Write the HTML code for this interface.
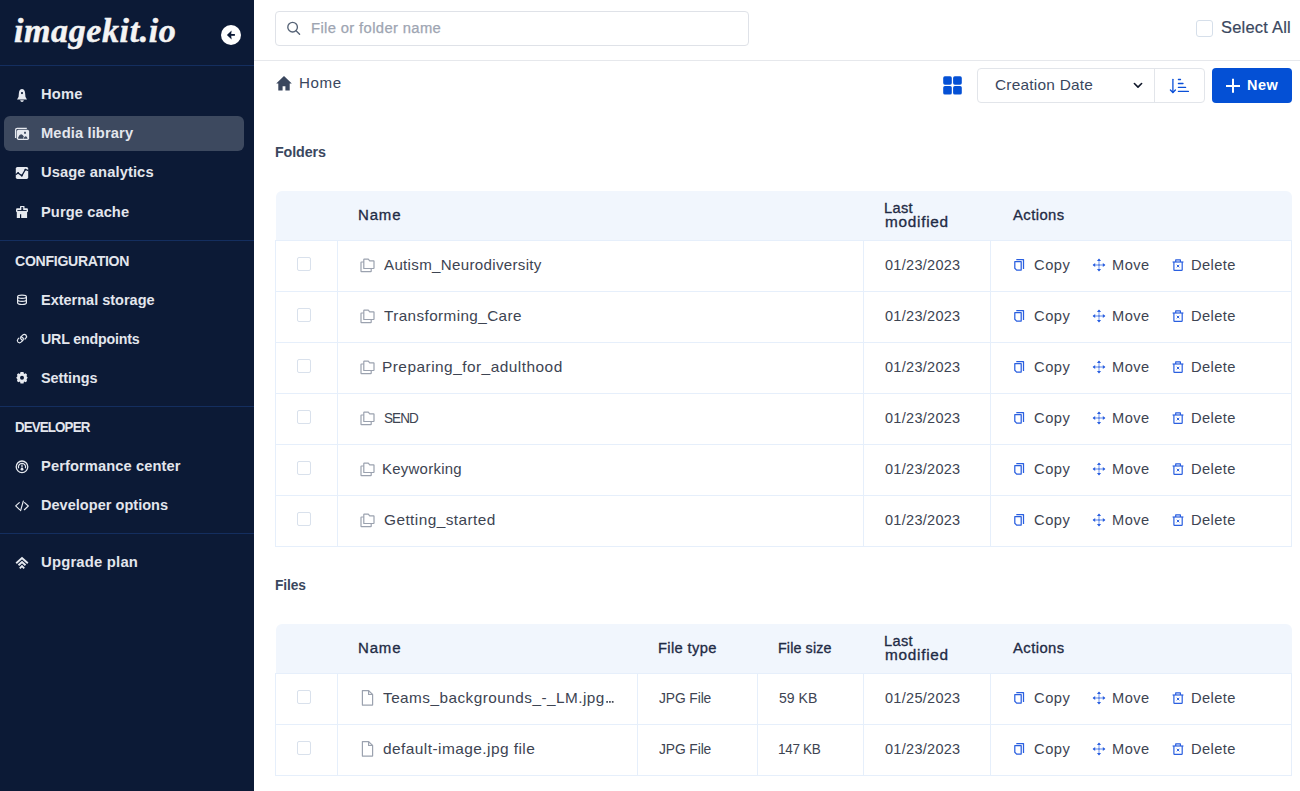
<!DOCTYPE html>
<html><head><meta charset="utf-8">
<style>
*{box-sizing:border-box;margin:0;padding:0}
html,body{width:1300px;height:791px;overflow:hidden;background:#fff;font-family:"Liberation Sans",sans-serif}
.abs{position:absolute}
.tx{position:absolute;white-space:pre;transform-origin:0 0}
#sb{position:absolute;left:0;top:0;width:254px;height:791px;background:#0c1a36}
.sbdiv{position:absolute;left:0;width:254px;height:1px;background:#142e5f}
.chk{position:absolute;width:14px;height:14px;border:1px solid #d9e1ec;border-radius:2px;background:#fff}
.tbl{position:absolute;left:275px;width:1017px;border-left:1px solid #e6effb;border-right:1px solid #e6effb}
.thd{position:absolute;background:#f1f6fd;border-radius:6px 6px 0 0}
.hl{position:absolute;height:1px;background:#e6effb}
.vl{position:absolute;width:1px;background:#e6effb}
svg{position:absolute;overflow:visible}
</style></head><body>
<div id="sb"></div>
<div class="sbdiv" style="top:65px"></div>
<div class="sbdiv" style="top:240px"></div>
<div class="sbdiv" style="top:406px"></div>
<div class="sbdiv" style="top:533px"></div>
<div class="abs" style="left:4px;top:116px;width:240px;height:35px;background:#3d495f;border-radius:6px"></div>
<div class="abs" style="left:254px;top:60px;width:1046px;height:1px;background:#e6e8ec"></div>
<div class="abs" style="left:275px;top:11px;width:474px;height:35px;border:1px solid #dfe2e8;border-radius:4px"></div>
<div class="abs" style="left:1196px;top:20px;width:17px;height:17px;border:1px solid #d6dfea;border-radius:3px"></div>
<div class="abs" style="left:977px;top:68px;width:228px;height:35px;border:1px solid #e2e5ea;border-radius:4px"></div>
<div class="abs" style="left:1154px;top:69px;width:1px;height:33px;background:#e2e5ea"></div>
<div class="abs" style="left:1212px;top:68px;width:80px;height:35px;background:#0450d5;border-radius:4px"></div>
<div class="thd" style="left:276px;top:191px;width:1016px;height:49px"></div>
<div class="vl" style="left:275px;top:240px;height:307px"></div>
<div class="vl" style="left:1291px;top:240px;height:307px"></div>
<div class="hl" style="left:275px;top:240px;width:1017px"></div>
<div class="hl" style="left:275px;top:291px;width:1017px"></div>
<div class="hl" style="left:275px;top:342px;width:1017px"></div>
<div class="hl" style="left:275px;top:393px;width:1017px"></div>
<div class="hl" style="left:275px;top:444px;width:1017px"></div>
<div class="hl" style="left:275px;top:495px;width:1017px"></div>
<div class="hl" style="left:275px;top:546px;width:1017px"></div>
<div class="vl" style="left:337px;top:240px;height:306px"></div>
<div class="vl" style="left:863px;top:240px;height:306px"></div>
<div class="vl" style="left:990px;top:240px;height:306px"></div>
<div class="chk" style="left:297px;top:257px"></div>
<div class="chk" style="left:297px;top:308px"></div>
<div class="chk" style="left:297px;top:359px"></div>
<div class="chk" style="left:297px;top:410px"></div>
<div class="chk" style="left:297px;top:461px"></div>
<div class="chk" style="left:297px;top:512px"></div>
<div class="thd" style="left:276px;top:624px;width:1016px;height:49px"></div>
<div class="vl" style="left:275px;top:673px;height:103px"></div>
<div class="vl" style="left:1291px;top:673px;height:103px"></div>
<div class="hl" style="left:275px;top:673px;width:1017px"></div>
<div class="hl" style="left:275px;top:724px;width:1017px"></div>
<div class="hl" style="left:275px;top:775px;width:1017px"></div>
<div class="vl" style="left:337px;top:673px;height:102px"></div>
<div class="vl" style="left:637px;top:673px;height:102px"></div>
<div class="vl" style="left:757px;top:673px;height:102px"></div>
<div class="vl" style="left:863px;top:673px;height:102px"></div>
<div class="vl" style="left:990px;top:673px;height:102px"></div>
<div class="chk" style="left:297px;top:690px"></div>
<div class="chk" style="left:297px;top:741px"></div>
<div class="tx" style="left:14px;top:14.3px;font-family:'Liberation Serif',serif;font-style:italic;font-weight:700;font-size:34px;line-height:34px;color:#f4f4f4;letter-spacing:0.6px;-webkit-text-stroke:0.5px #f4f4f4">imagekit.io</div>
<svg style="left:221px;top:25px" width="20" height="20" viewBox="0 0 20 20"><circle cx="10" cy="10" r="10" fill="#fff"/><path d="M5.9 9.9 L10.6 5.4 L10.1 9.9 L10.6 14.4 Z" fill="#0c1a36"/><rect x="9.8" y="9" width="4.1" height="1.8" fill="#0c1a36"/></svg>
<svg style="left:0;top:0" width="254" height="600" viewBox="0 0 254 600"><path d="M18.4 98.5 L18.9 93 C19.1 90.3 20.4 89 22 89 C23.6 89 24.9 90.3 25.1 93 L25.6 98.5 Z" fill="#e7eaf0"/><path d="M17 99.6 L27 99.6 L25.6 97.2 L18.4 97.2 Z" fill="#e7eaf0"/><circle cx="22" cy="93.1" r="1.05" fill="#0c1a36"/><path d="M20.1 100.2 L23.9 100.2 Q23.6 102 22 102 Q20.4 102 20.1 100.2 Z" fill="#e7eaf0"/><path d="M15.6 138 L15.6 130 Q15.6 128.3 17.3 128.3 L26.8 128.3" stroke="#e7eaf0" stroke-width="1.3" fill="none"/><rect x="16.8" y="129.8" width="12.3" height="10.3" rx="1.8" fill="#e7eaf0"/><path d="M18.2 138.8 L18.2 137.5 Q19.5 134.2 21.3 134.3 Q22.8 134.6 23.6 136.3 L23.2 138.8 Z" fill="#3d495f"/><path d="M23.5 138.8 Q24.3 136 25.8 136.2 Q27.2 136.5 27.6 138.8 Z" fill="#3d495f"/><rect x="24" y="131.8" width="2" height="1.9" rx="0.4" fill="#3d495f"/><rect x="15.8" y="167" width="12.4" height="11.9" rx="1.6" fill="#e7eaf0"/><path d="M15.5 174.7 L18.1 173 L21.8 175.8 L25.4 169.5 L28.5 170.6" stroke="#0c1a36" stroke-width="1.3" fill="none"/><circle cx="18.1" cy="173" r="0.9" fill="#0c1a36"/><circle cx="21.8" cy="175.5" r="0.9" fill="#0c1a36"/><circle cx="25.4" cy="169.6" r="0.9" fill="#0c1a36"/><rect x="20" y="205.9" width="4.5" height="3.5" rx="0.6" fill="#e7eaf0"/><rect x="21.3" y="207.1" width="1.9" height="3.4" fill="#0c1a36"/><rect x="16" y="208.2" width="12" height="4" rx="1.3" fill="#e7eaf0"/><rect x="17.4" y="210.1" width="9.2" height="0.9" fill="#0c1a36"/><rect x="21.3" y="208.2" width="1.9" height="2" fill="#0c1a36"/><path d="M16.8 212 L27.1 212 L27.1 218 L21.2 218 L21.2 214.3 L20 214.3 L20 218 L16.8 218 Z" fill="#e7eaf0"/><g stroke="#e7eaf0" stroke-width="1.2" fill="none"><ellipse cx="22" cy="296.8" rx="4.4" ry="1.6"/><path d="M17.6 296.8 L17.6 302.8 Q17.6 304.5 22 304.5 Q26.4 304.5 26.4 302.8 L26.4 296.8"/><path d="M17.6 299.8 Q17.6 301.4 22 301.4 Q26.4 301.4 26.4 299.8"/></g><g stroke="#e7eaf0" stroke-width="1.2" fill="none" stroke-linecap="round"><path d="M21.2 336.6 L22.6 335.1 Q24.3 333.6 25.9 335 Q27.3 336.6 25.8 338.2 L25 339"/><path d="M22.6 340.6 L21.3 341.9 Q19.6 343.5 18 342.1 Q16.6 340.5 18.1 338.9 L18.9 338.1"/><path d="M21.1 336.6 Q20 338 21 339 Q22 340 22.6 340.6"/><path d="M22.8 340.3 Q24 339 23 338 Q22 337 21.3 336.8"/></g><path d="M22 371.9 L23.5 372 L24 374 L25.7 373.2 L27 374.5 L26.6 376.2 L27.7 377.7 L26.6 379.2 L27 380.9 L25.7 382.2 L24 381.4 L23.5 383.5 L20.5 383.5 L20 381.4 L18.3 382.2 L17 380.9 L17.4 379.2 L16.2 377.7 L17.4 376.2 L17 374.5 L18.3 373.2 L20 374 L20.5 372 Z" fill="#e7eaf0"/><circle cx="22" cy="377.7" r="2" fill="#0c1a36"/><circle cx="22" cy="466.8" r="5.8" stroke="#e7eaf0" stroke-width="1.3" fill="none"/><path d="M18.6 468.2 A3.6 3.6 0 1 1 25.4 468.2" stroke="#e7eaf0" stroke-width="1.2" fill="none"/><rect x="21.4" y="464.5" width="1.2" height="3" fill="#e7eaf0"/><circle cx="22" cy="469.2" r="1.4" fill="#e7eaf0"/><g stroke="#e7eaf0" stroke-width="1.2" fill="none" stroke-linecap="round" stroke-linejoin="round"><path d="M19.3 502.6 L15.7 505.9 L19.6 509.6"/><path d="M24.6 502.6 L28.3 506 L24.4 509.7"/><path d="M23.3 501.2 L20.6 510.6"/></g><g stroke="#e7eaf0" stroke-width="1.9" fill="none" stroke-linejoin="miter"><path d="M16.2 563.3 L22 558 L27.8 563.3"/><path d="M18.5 565.2 L22 562 L25.5 565.2"/><path d="M19.8 568.4 L22 566.2 L24.2 568.4"/></g></svg>
<svg style="left:0;top:0" width="1300" height="791" viewBox="0 0 1300 791"><circle cx="292.6" cy="27.2" r="4.8" stroke="#566376" stroke-width="1.35" fill="none"/><path d="M296.3 30.9 L299.6 34.2" stroke="#566376" stroke-width="1.35" stroke-linecap="round"/><path d="M284 76 L276.2 83.6 L278.3 83.6 L278.3 90.6 L282.6 90.6 L282.6 86.3 L285.4 86.3 L285.4 90.6 L289.7 90.6 L289.7 83.6 L291.8 83.6 Z" fill="#3a475e"/><g fill="#0450d5"><rect x="943.2" y="76.2" width="8.6" height="8.5" rx="1.7"/><rect x="953.1" y="76.2" width="8.7" height="8.5" rx="1.7"/><rect x="943.2" y="86.1" width="8.6" height="8.5" rx="1.7"/><rect x="953.1" y="86.1" width="8.7" height="8.5" rx="1.7"/></g><path d="M1134.4 83.5 L1138 87.1 L1141.6 83.5" stroke="#0f1729" stroke-width="1.6" fill="none" stroke-linecap="round" stroke-linejoin="round"/><g stroke="#0a4fd8" stroke-width="1.3" stroke-linecap="round" fill="none"><path d="M1172.9 79.3 L1172.9 92.3"/><path d="M1170.4 90 L1172.9 92.5 L1175.4 90"/><path d="M1178.4 79.5 L1180.5 79.5"/><path d="M1178.4 83.5 L1183 83.5"/><path d="M1178.4 87.4 L1185.6 87.4"/><path d="M1178.4 91.4 L1188.4 91.4"/></g><path d="M1233 78.8 L1233 92.8 M1226 86 L1240 86" stroke="#fff" stroke-width="2"/>
<g stroke="#9ba2af" stroke-width="1.2" fill="none" stroke-linejoin="round"><path d="M363.8 263.5 L363.8 259.6 Q363.8 259.2 364.3 259.2 L368.3 259.2 L369.7 260.9 L373.6 260.9 Q374 260.9 374 261.3 L374 268 Q374 268.5 373.6 268.5 L363.8 268.5 Z"/><path d="M363.8 262 L361.5 262 Q361 262 361 262.5 L361 271.3 Q361 271.6 361.4 271.6 L370.7 271.6 Q371.2 271.6 371.2 271.2 L371.2 268.5"/></g><g stroke="#2a5fe0" stroke-width="1.25" fill="none" stroke-linejoin="round"><path d="M1014.8 261.7 L1021.2 261.7 L1021.2 270.1 L1016.6 270.1 L1014.8 268.3 Z"/><path d="M1016.3 259.6 L1023.5 259.6 L1023.5 269"/></g><g fill="#2a5fe0"><path d="M1099 259.1 L1099 270.9 M1093.2 265 L1104.8 265" stroke="#2a5fe0" stroke-width="1.3" stroke-opacity="0.5"/><path d="M1096.9 261.1 L1099 258.5 L1101.1 261.1 Z"/><path d="M1096.9 268.9 L1099 271.5 L1101.1 268.9 Z"/><path d="M1095.2 262.9 L1092.6 265 L1095.2 267.1 Z"/><path d="M1102.8 262.9 L1105.4 265 L1102.8 267.1 Z"/><circle cx="1099" cy="265" r="0.9" fill-opacity="0.6"/></g><g stroke="#2a5fe0" stroke-width="1.2" fill="none" stroke-linejoin="round"><path d="M1172.6 262 L1183.4 262"/><path d="M1175.7 262 L1175.7 259.9 L1180.4 259.9 L1180.4 262"/><path d="M1173.9 262 L1173.9 269.8 Q1173.9 270.4 1174.5 270.4 L1181.6 270.4 Q1182.2 270.4 1182.2 269.8 L1182.2 262"/><path d="M1176.8 264.8 L1179.3 267.3 M1179.3 264.8 L1176.8 267.3" stroke-width="1"/></g>
<g stroke="#9ba2af" stroke-width="1.2" fill="none" stroke-linejoin="round"><path d="M363.8 314.5 L363.8 310.6 Q363.8 310.2 364.3 310.2 L368.3 310.2 L369.7 311.9 L373.6 311.9 Q374 311.9 374 312.3 L374 319 Q374 319.5 373.6 319.5 L363.8 319.5 Z"/><path d="M363.8 313 L361.5 313 Q361 313 361 313.5 L361 322.3 Q361 322.6 361.4 322.6 L370.7 322.6 Q371.2 322.6 371.2 322.2 L371.2 319.5"/></g><g stroke="#2a5fe0" stroke-width="1.25" fill="none" stroke-linejoin="round"><path d="M1014.8 312.7 L1021.2 312.7 L1021.2 321.1 L1016.6 321.1 L1014.8 319.3 Z"/><path d="M1016.3 310.6 L1023.5 310.6 L1023.5 320"/></g><g fill="#2a5fe0"><path d="M1099 310.1 L1099 321.9 M1093.2 316 L1104.8 316" stroke="#2a5fe0" stroke-width="1.3" stroke-opacity="0.5"/><path d="M1096.9 312.1 L1099 309.5 L1101.1 312.1 Z"/><path d="M1096.9 319.9 L1099 322.5 L1101.1 319.9 Z"/><path d="M1095.2 313.9 L1092.6 316 L1095.2 318.1 Z"/><path d="M1102.8 313.9 L1105.4 316 L1102.8 318.1 Z"/><circle cx="1099" cy="316" r="0.9" fill-opacity="0.6"/></g><g stroke="#2a5fe0" stroke-width="1.2" fill="none" stroke-linejoin="round"><path d="M1172.6 313 L1183.4 313"/><path d="M1175.7 313 L1175.7 310.9 L1180.4 310.9 L1180.4 313"/><path d="M1173.9 313 L1173.9 320.8 Q1173.9 321.4 1174.5 321.4 L1181.6 321.4 Q1182.2 321.4 1182.2 320.8 L1182.2 313"/><path d="M1176.8 315.8 L1179.3 318.3 M1179.3 315.8 L1176.8 318.3" stroke-width="1"/></g>
<g stroke="#9ba2af" stroke-width="1.2" fill="none" stroke-linejoin="round"><path d="M363.8 365.5 L363.8 361.6 Q363.8 361.2 364.3 361.2 L368.3 361.2 L369.7 362.9 L373.6 362.9 Q374 362.9 374 363.3 L374 370 Q374 370.5 373.6 370.5 L363.8 370.5 Z"/><path d="M363.8 364 L361.5 364 Q361 364 361 364.5 L361 373.3 Q361 373.6 361.4 373.6 L370.7 373.6 Q371.2 373.6 371.2 373.2 L371.2 370.5"/></g><g stroke="#2a5fe0" stroke-width="1.25" fill="none" stroke-linejoin="round"><path d="M1014.8 363.7 L1021.2 363.7 L1021.2 372.1 L1016.6 372.1 L1014.8 370.3 Z"/><path d="M1016.3 361.6 L1023.5 361.6 L1023.5 371"/></g><g fill="#2a5fe0"><path d="M1099 361.1 L1099 372.9 M1093.2 367 L1104.8 367" stroke="#2a5fe0" stroke-width="1.3" stroke-opacity="0.5"/><path d="M1096.9 363.1 L1099 360.5 L1101.1 363.1 Z"/><path d="M1096.9 370.9 L1099 373.5 L1101.1 370.9 Z"/><path d="M1095.2 364.9 L1092.6 367 L1095.2 369.1 Z"/><path d="M1102.8 364.9 L1105.4 367 L1102.8 369.1 Z"/><circle cx="1099" cy="367" r="0.9" fill-opacity="0.6"/></g><g stroke="#2a5fe0" stroke-width="1.2" fill="none" stroke-linejoin="round"><path d="M1172.6 364 L1183.4 364"/><path d="M1175.7 364 L1175.7 361.9 L1180.4 361.9 L1180.4 364"/><path d="M1173.9 364 L1173.9 371.8 Q1173.9 372.4 1174.5 372.4 L1181.6 372.4 Q1182.2 372.4 1182.2 371.8 L1182.2 364"/><path d="M1176.8 366.8 L1179.3 369.3 M1179.3 366.8 L1176.8 369.3" stroke-width="1"/></g>
<g stroke="#9ba2af" stroke-width="1.2" fill="none" stroke-linejoin="round"><path d="M363.8 416.5 L363.8 412.6 Q363.8 412.2 364.3 412.2 L368.3 412.2 L369.7 413.9 L373.6 413.9 Q374 413.9 374 414.3 L374 421 Q374 421.5 373.6 421.5 L363.8 421.5 Z"/><path d="M363.8 415 L361.5 415 Q361 415 361 415.5 L361 424.3 Q361 424.6 361.4 424.6 L370.7 424.6 Q371.2 424.6 371.2 424.2 L371.2 421.5"/></g><g stroke="#2a5fe0" stroke-width="1.25" fill="none" stroke-linejoin="round"><path d="M1014.8 414.7 L1021.2 414.7 L1021.2 423.1 L1016.6 423.1 L1014.8 421.3 Z"/><path d="M1016.3 412.6 L1023.5 412.6 L1023.5 422"/></g><g fill="#2a5fe0"><path d="M1099 412.1 L1099 423.9 M1093.2 418 L1104.8 418" stroke="#2a5fe0" stroke-width="1.3" stroke-opacity="0.5"/><path d="M1096.9 414.1 L1099 411.5 L1101.1 414.1 Z"/><path d="M1096.9 421.9 L1099 424.5 L1101.1 421.9 Z"/><path d="M1095.2 415.9 L1092.6 418 L1095.2 420.1 Z"/><path d="M1102.8 415.9 L1105.4 418 L1102.8 420.1 Z"/><circle cx="1099" cy="418" r="0.9" fill-opacity="0.6"/></g><g stroke="#2a5fe0" stroke-width="1.2" fill="none" stroke-linejoin="round"><path d="M1172.6 415 L1183.4 415"/><path d="M1175.7 415 L1175.7 412.9 L1180.4 412.9 L1180.4 415"/><path d="M1173.9 415 L1173.9 422.8 Q1173.9 423.4 1174.5 423.4 L1181.6 423.4 Q1182.2 423.4 1182.2 422.8 L1182.2 415"/><path d="M1176.8 417.8 L1179.3 420.3 M1179.3 417.8 L1176.8 420.3" stroke-width="1"/></g>
<g stroke="#9ba2af" stroke-width="1.2" fill="none" stroke-linejoin="round"><path d="M363.8 467.5 L363.8 463.6 Q363.8 463.2 364.3 463.2 L368.3 463.2 L369.7 464.9 L373.6 464.9 Q374 464.9 374 465.3 L374 472 Q374 472.5 373.6 472.5 L363.8 472.5 Z"/><path d="M363.8 466 L361.5 466 Q361 466 361 466.5 L361 475.3 Q361 475.6 361.4 475.6 L370.7 475.6 Q371.2 475.6 371.2 475.2 L371.2 472.5"/></g><g stroke="#2a5fe0" stroke-width="1.25" fill="none" stroke-linejoin="round"><path d="M1014.8 465.7 L1021.2 465.7 L1021.2 474.1 L1016.6 474.1 L1014.8 472.3 Z"/><path d="M1016.3 463.6 L1023.5 463.6 L1023.5 473"/></g><g fill="#2a5fe0"><path d="M1099 463.1 L1099 474.9 M1093.2 469 L1104.8 469" stroke="#2a5fe0" stroke-width="1.3" stroke-opacity="0.5"/><path d="M1096.9 465.1 L1099 462.5 L1101.1 465.1 Z"/><path d="M1096.9 472.9 L1099 475.5 L1101.1 472.9 Z"/><path d="M1095.2 466.9 L1092.6 469 L1095.2 471.1 Z"/><path d="M1102.8 466.9 L1105.4 469 L1102.8 471.1 Z"/><circle cx="1099" cy="469" r="0.9" fill-opacity="0.6"/></g><g stroke="#2a5fe0" stroke-width="1.2" fill="none" stroke-linejoin="round"><path d="M1172.6 466 L1183.4 466"/><path d="M1175.7 466 L1175.7 463.9 L1180.4 463.9 L1180.4 466"/><path d="M1173.9 466 L1173.9 473.8 Q1173.9 474.4 1174.5 474.4 L1181.6 474.4 Q1182.2 474.4 1182.2 473.8 L1182.2 466"/><path d="M1176.8 468.8 L1179.3 471.3 M1179.3 468.8 L1176.8 471.3" stroke-width="1"/></g>
<g stroke="#9ba2af" stroke-width="1.2" fill="none" stroke-linejoin="round"><path d="M363.8 518.5 L363.8 514.6 Q363.8 514.2 364.3 514.2 L368.3 514.2 L369.7 515.9 L373.6 515.9 Q374 515.9 374 516.3 L374 523 Q374 523.5 373.6 523.5 L363.8 523.5 Z"/><path d="M363.8 517 L361.5 517 Q361 517 361 517.5 L361 526.3 Q361 526.6 361.4 526.6 L370.7 526.6 Q371.2 526.6 371.2 526.2 L371.2 523.5"/></g><g stroke="#2a5fe0" stroke-width="1.25" fill="none" stroke-linejoin="round"><path d="M1014.8 516.7 L1021.2 516.7 L1021.2 525.1 L1016.6 525.1 L1014.8 523.3 Z"/><path d="M1016.3 514.6 L1023.5 514.6 L1023.5 524"/></g><g fill="#2a5fe0"><path d="M1099 514.1 L1099 525.9 M1093.2 520 L1104.8 520" stroke="#2a5fe0" stroke-width="1.3" stroke-opacity="0.5"/><path d="M1096.9 516.1 L1099 513.5 L1101.1 516.1 Z"/><path d="M1096.9 523.9 L1099 526.5 L1101.1 523.9 Z"/><path d="M1095.2 517.9 L1092.6 520 L1095.2 522.1 Z"/><path d="M1102.8 517.9 L1105.4 520 L1102.8 522.1 Z"/><circle cx="1099" cy="520" r="0.9" fill-opacity="0.6"/></g><g stroke="#2a5fe0" stroke-width="1.2" fill="none" stroke-linejoin="round"><path d="M1172.6 517 L1183.4 517"/><path d="M1175.7 517 L1175.7 514.9 L1180.4 514.9 L1180.4 517"/><path d="M1173.9 517 L1173.9 524.8 Q1173.9 525.4 1174.5 525.4 L1181.6 525.4 Q1182.2 525.4 1182.2 524.8 L1182.2 517"/><path d="M1176.8 519.8 L1179.3 522.3 M1179.3 519.8 L1176.8 522.3" stroke-width="1"/></g>
<g stroke="#9ba2af" stroke-width="1.2" fill="none" stroke-linejoin="round"><path d="M362.4 690.6 L368.6 690.6 L372.6 694.5 L372.6 705 Q372.6 705.2 372.3 705.2 L362.7 705.2 Q362.4 705.2 362.4 704.9 Z"/><path d="M368.6 690.6 L368.6 694.5 L372.6 694.5"/></g><g stroke="#2a5fe0" stroke-width="1.25" fill="none" stroke-linejoin="round"><path d="M1014.8 694.7 L1021.2 694.7 L1021.2 703.1 L1016.6 703.1 L1014.8 701.3 Z"/><path d="M1016.3 692.6 L1023.5 692.6 L1023.5 702"/></g><g fill="#2a5fe0"><path d="M1099 692.1 L1099 703.9 M1093.2 698 L1104.8 698" stroke="#2a5fe0" stroke-width="1.3" stroke-opacity="0.5"/><path d="M1096.9 694.1 L1099 691.5 L1101.1 694.1 Z"/><path d="M1096.9 701.9 L1099 704.5 L1101.1 701.9 Z"/><path d="M1095.2 695.9 L1092.6 698 L1095.2 700.1 Z"/><path d="M1102.8 695.9 L1105.4 698 L1102.8 700.1 Z"/><circle cx="1099" cy="698" r="0.9" fill-opacity="0.6"/></g><g stroke="#2a5fe0" stroke-width="1.2" fill="none" stroke-linejoin="round"><path d="M1172.6 695 L1183.4 695"/><path d="M1175.7 695 L1175.7 692.9 L1180.4 692.9 L1180.4 695"/><path d="M1173.9 695 L1173.9 702.8 Q1173.9 703.4 1174.5 703.4 L1181.6 703.4 Q1182.2 703.4 1182.2 702.8 L1182.2 695"/><path d="M1176.8 697.8 L1179.3 700.3 M1179.3 697.8 L1176.8 700.3" stroke-width="1"/></g>
<g stroke="#9ba2af" stroke-width="1.2" fill="none" stroke-linejoin="round"><path d="M362.4 741.6 L368.6 741.6 L372.6 745.5 L372.6 756 Q372.6 756.2 372.3 756.2 L362.7 756.2 Q362.4 756.2 362.4 755.9 Z"/><path d="M368.6 741.6 L368.6 745.5 L372.6 745.5"/></g><g stroke="#2a5fe0" stroke-width="1.25" fill="none" stroke-linejoin="round"><path d="M1014.8 745.7 L1021.2 745.7 L1021.2 754.1 L1016.6 754.1 L1014.8 752.3 Z"/><path d="M1016.3 743.6 L1023.5 743.6 L1023.5 753"/></g><g fill="#2a5fe0"><path d="M1099 743.1 L1099 754.9 M1093.2 749 L1104.8 749" stroke="#2a5fe0" stroke-width="1.3" stroke-opacity="0.5"/><path d="M1096.9 745.1 L1099 742.5 L1101.1 745.1 Z"/><path d="M1096.9 752.9 L1099 755.5 L1101.1 752.9 Z"/><path d="M1095.2 746.9 L1092.6 749 L1095.2 751.1 Z"/><path d="M1102.8 746.9 L1105.4 749 L1102.8 751.1 Z"/><circle cx="1099" cy="749" r="0.9" fill-opacity="0.6"/></g><g stroke="#2a5fe0" stroke-width="1.2" fill="none" stroke-linejoin="round"><path d="M1172.6 746 L1183.4 746"/><path d="M1175.7 746 L1175.7 743.9 L1180.4 743.9 L1180.4 746"/><path d="M1173.9 746 L1173.9 753.8 Q1173.9 754.4 1174.5 754.4 L1181.6 754.4 Q1182.2 754.4 1182.2 753.8 L1182.2 746"/><path d="M1176.8 748.8 L1179.3 751.3 M1179.3 748.8 L1176.8 751.3" stroke-width="1"/></g>
<g fill="#3d4452"><rect x="606.2" y="700.9" width="1.8" height="1.9" rx="0.5"/><rect x="609" y="700.9" width="1.8" height="1.9" rx="0.5"/><rect x="611.8" y="700.9" width="1.8" height="1.9" rx="0.5"/></g>
</svg>
<div class="tx" style="left:41.00px;top:86.58px;font-size:14.5px;line-height:14.5px;font-weight:700;color:#e3e6ed;letter-spacing:0.194px;transform:scaleX(1.0147)">Home</div>
<div class="tx" style="left:41.00px;top:125.58px;font-size:14.5px;line-height:14.5px;font-weight:700;color:#e3e6ed;letter-spacing:0.107px;transform:scaleX(1.0146)">Media library</div>
<div class="tx" style="left:41.00px;top:164.58px;font-size:14.5px;line-height:14.5px;font-weight:700;color:#e3e6ed;letter-spacing:0.104px;transform:scaleX(1.0135)">Usage analytics</div>
<div class="tx" style="left:41.00px;top:204.53px;font-size:14.5px;line-height:14.5px;font-weight:700;color:#e3e6ed;letter-spacing:0.090px;transform:scaleX(1.0106)">Purge cache</div>
<div class="tx" style="left:15.00px;top:253.58px;font-size:14.5px;line-height:14.5px;font-weight:700;color:#e3e6ed;letter-spacing:-0.295px;transform:scaleX(0.9715)">CONFIGURATION</div>
<div class="tx" style="left:41.00px;top:292.58px;font-size:14.5px;line-height:14.5px;font-weight:700;color:#e3e6ed;letter-spacing:-0.002px;transform:scaleX(0.9997)">External storage</div>
<div class="tx" style="left:41.20px;top:331.58px;font-size:14.5px;line-height:14.5px;font-weight:700;color:#e3e6ed;letter-spacing:-0.180px;transform:scaleX(0.9794)">URL endpoints</div>
<div class="tx" style="left:41.20px;top:370.58px;font-size:14.5px;line-height:14.5px;font-weight:700;color:#e3e6ed;letter-spacing:-0.046px;transform:scaleX(0.9944)">Settings</div>
<div class="tx" style="left:15.00px;top:419.58px;font-size:14.5px;line-height:14.5px;font-weight:700;color:#e3e6ed;letter-spacing:-0.961px;transform:scaleX(0.9213)">DEVELOPER</div>
<div class="tx" style="left:41.00px;top:458.58px;font-size:14.5px;line-height:14.5px;font-weight:700;color:#e3e6ed;letter-spacing:0.094px;transform:scaleX(1.0119)">Performance center</div>
<div class="tx" style="left:41.00px;top:497.58px;font-size:14.5px;line-height:14.5px;font-weight:700;color:#e3e6ed;letter-spacing:0.018px;transform:scaleX(1.0023)">Developer options</div>
<div class="tx" style="left:41.00px;top:554.53px;font-size:14.5px;line-height:14.5px;font-weight:700;color:#e3e6ed;letter-spacing:0.187px;transform:scaleX(1.0229)">Upgrade plan</div>
<div class="tx" style="left:310.94px;top:20.85px;font-size:14.0px;line-height:14.0px;font-weight:400;color:#9ea5b2;letter-spacing:0.344px;transform:scaleX(1.0564);-webkit-text-stroke:0.25px #9ea5b2">File or folder name</div>
<div class="tx" style="left:1221.00px;top:20.36px;font-size:16.0px;line-height:16.0px;font-weight:400;color:#3a475e;letter-spacing:0.208px;transform:scaleX(1.0292);-webkit-text-stroke:0.2px #3a475e">Select All</div>
<div class="tx" style="left:298.95px;top:75.63px;font-size:14.5px;line-height:14.5px;font-weight:400;color:#3a475e;letter-spacing:0.540px;transform:scaleX(1.0450)">Home</div>
<div class="tx" style="left:995.40px;top:77.30px;font-size:15.0px;line-height:15.0px;font-weight:400;color:#3a475e;letter-spacing:0.218px;transform:scaleX(1.0292)">Creation Date</div>
<div class="tx" style="left:1247.20px;top:77.95px;font-size:14.0px;line-height:14.0px;font-weight:700;color:#ffffff;letter-spacing:0.461px;transform:scaleX(1.0329)">New</div>
<div class="tx" style="left:275.40px;top:144.83px;font-size:14.5px;line-height:14.5px;font-weight:700;color:#3a475e;letter-spacing:-0.119px;transform:scaleX(0.9865)">Folders</div>
<div class="tx" style="left:275.30px;top:577.85px;font-size:14.0px;line-height:14.0px;font-weight:700;color:#3a475e;letter-spacing:-0.142px;transform:scaleX(0.9826)">Files</div>
<div class="tx" style="left:358.23px;top:208.35px;font-size:14.0px;line-height:14.0px;font-weight:400;color:#1f2b45;letter-spacing:0.801px;transform:scaleX(1.0703);-webkit-text-stroke:0.3px #1f2b45">Name</div>
<div class="tx" style="left:883.56px;top:201.05px;font-size:14.0px;line-height:14.0px;font-weight:400;color:#1f2b45;letter-spacing:0.340px;transform:scaleX(1.0416);-webkit-text-stroke:0.3px #1f2b45">Last</div>
<div class="tx" style="left:884.60px;top:214.85px;font-size:14.0px;line-height:14.0px;font-weight:400;color:#1f2b45;letter-spacing:0.656px;transform:scaleX(1.0966);-webkit-text-stroke:0.3px #1f2b45">modified</div>
<div class="tx" style="left:1012.60px;top:208.35px;font-size:14.0px;line-height:14.0px;font-weight:400;color:#1f2b45;letter-spacing:0.417px;transform:scaleX(1.0576);-webkit-text-stroke:0.3px #1f2b45">Actions</div>
<div class="tx" style="left:358.23px;top:641.35px;font-size:14.0px;line-height:14.0px;font-weight:400;color:#1f2b45;letter-spacing:0.801px;transform:scaleX(1.0703);-webkit-text-stroke:0.3px #1f2b45">Name</div>
<div class="tx" style="left:657.95px;top:641.35px;font-size:14.0px;line-height:14.0px;font-weight:400;color:#1f2b45;letter-spacing:0.325px;transform:scaleX(1.0525);-webkit-text-stroke:0.3px #1f2b45">File type</div>
<div class="tx" style="left:777.98px;top:641.35px;font-size:14.0px;line-height:14.0px;font-weight:400;color:#1f2b45;letter-spacing:0.125px;transform:scaleX(1.0202);-webkit-text-stroke:0.3px #1f2b45">File size</div>
<div class="tx" style="left:883.56px;top:634.05px;font-size:14.0px;line-height:14.0px;font-weight:400;color:#1f2b45;letter-spacing:0.340px;transform:scaleX(1.0416);-webkit-text-stroke:0.3px #1f2b45">Last</div>
<div class="tx" style="left:884.60px;top:647.85px;font-size:14.0px;line-height:14.0px;font-weight:400;color:#1f2b45;letter-spacing:0.656px;transform:scaleX(1.0966);-webkit-text-stroke:0.3px #1f2b45">modified</div>
<div class="tx" style="left:1012.60px;top:641.35px;font-size:14.0px;line-height:14.0px;font-weight:400;color:#1f2b45;letter-spacing:0.417px;transform:scaleX(1.0576);-webkit-text-stroke:0.3px #1f2b45">Actions</div>
<div class="tx" style="left:383.50px;top:257.53px;font-size:14.5px;line-height:14.5px;font-weight:400;color:#3d4452;letter-spacing:0.297px;transform:scaleX(1.0425)">Autism_Neurodiversity</div>
<div class="tx" style="left:884.60px;top:257.95px;font-size:14.0px;line-height:14.0px;font-weight:400;color:#3d4452;letter-spacing:0.274px;transform:scaleX(1.0364)">01/23/2023</div>
<div class="tx" style="left:1034.00px;top:257.95px;font-size:14.0px;line-height:14.0px;font-weight:400;color:#3d4452;letter-spacing:0.511px;transform:scaleX(1.0492)">Copy</div>
<div class="tx" style="left:1111.86px;top:257.95px;font-size:14.0px;line-height:14.0px;font-weight:400;color:#3d4452;letter-spacing:0.471px;transform:scaleX(1.0441)">Move</div>
<div class="tx" style="left:1191.35px;top:257.95px;font-size:14.0px;line-height:14.0px;font-weight:400;color:#3d4452;letter-spacing:0.373px;transform:scaleX(1.0494)">Delete</div>
<div class="tx" style="left:383.50px;top:308.53px;font-size:14.5px;line-height:14.5px;font-weight:400;color:#3d4452;letter-spacing:0.389px;transform:scaleX(1.0527)">Transforming_Care</div>
<div class="tx" style="left:884.60px;top:308.95px;font-size:14.0px;line-height:14.0px;font-weight:400;color:#3d4452;letter-spacing:0.274px;transform:scaleX(1.0364)">01/23/2023</div>
<div class="tx" style="left:1034.00px;top:308.95px;font-size:14.0px;line-height:14.0px;font-weight:400;color:#3d4452;letter-spacing:0.511px;transform:scaleX(1.0492)">Copy</div>
<div class="tx" style="left:1111.86px;top:308.95px;font-size:14.0px;line-height:14.0px;font-weight:400;color:#3d4452;letter-spacing:0.471px;transform:scaleX(1.0441)">Move</div>
<div class="tx" style="left:1191.35px;top:308.95px;font-size:14.0px;line-height:14.0px;font-weight:400;color:#3d4452;letter-spacing:0.373px;transform:scaleX(1.0494)">Delete</div>
<div class="tx" style="left:382.44px;top:359.53px;font-size:14.5px;line-height:14.5px;font-weight:400;color:#3d4452;letter-spacing:0.438px;transform:scaleX(1.0648)">Preparing_for_adulthood</div>
<div class="tx" style="left:884.60px;top:359.95px;font-size:14.0px;line-height:14.0px;font-weight:400;color:#3d4452;letter-spacing:0.274px;transform:scaleX(1.0364)">01/23/2023</div>
<div class="tx" style="left:1034.00px;top:359.95px;font-size:14.0px;line-height:14.0px;font-weight:400;color:#3d4452;letter-spacing:0.511px;transform:scaleX(1.0492)">Copy</div>
<div class="tx" style="left:1111.86px;top:359.95px;font-size:14.0px;line-height:14.0px;font-weight:400;color:#3d4452;letter-spacing:0.471px;transform:scaleX(1.0441)">Move</div>
<div class="tx" style="left:1191.35px;top:359.95px;font-size:14.0px;line-height:14.0px;font-weight:400;color:#3d4452;letter-spacing:0.373px;transform:scaleX(1.0494)">Delete</div>
<div class="tx" style="left:383.50px;top:410.53px;font-size:14.5px;line-height:14.5px;font-weight:400;color:#3d4452;letter-spacing:-0.987px;transform:scaleX(0.9308)">SEND</div>
<div class="tx" style="left:884.60px;top:410.95px;font-size:14.0px;line-height:14.0px;font-weight:400;color:#3d4452;letter-spacing:0.274px;transform:scaleX(1.0364)">01/23/2023</div>
<div class="tx" style="left:1034.00px;top:410.95px;font-size:14.0px;line-height:14.0px;font-weight:400;color:#3d4452;letter-spacing:0.511px;transform:scaleX(1.0492)">Copy</div>
<div class="tx" style="left:1111.86px;top:410.95px;font-size:14.0px;line-height:14.0px;font-weight:400;color:#3d4452;letter-spacing:0.471px;transform:scaleX(1.0441)">Move</div>
<div class="tx" style="left:1191.35px;top:410.95px;font-size:14.0px;line-height:14.0px;font-weight:400;color:#3d4452;letter-spacing:0.373px;transform:scaleX(1.0494)">Delete</div>
<div class="tx" style="left:382.47px;top:461.53px;font-size:14.5px;line-height:14.5px;font-weight:400;color:#3d4452;letter-spacing:0.249px;transform:scaleX(1.0312)">Keyworking</div>
<div class="tx" style="left:884.60px;top:461.95px;font-size:14.0px;line-height:14.0px;font-weight:400;color:#3d4452;letter-spacing:0.274px;transform:scaleX(1.0364)">01/23/2023</div>
<div class="tx" style="left:1034.00px;top:461.95px;font-size:14.0px;line-height:14.0px;font-weight:400;color:#3d4452;letter-spacing:0.511px;transform:scaleX(1.0492)">Copy</div>
<div class="tx" style="left:1111.86px;top:461.95px;font-size:14.0px;line-height:14.0px;font-weight:400;color:#3d4452;letter-spacing:0.471px;transform:scaleX(1.0441)">Move</div>
<div class="tx" style="left:1191.35px;top:461.95px;font-size:14.0px;line-height:14.0px;font-weight:400;color:#3d4452;letter-spacing:0.373px;transform:scaleX(1.0494)">Delete</div>
<div class="tx" style="left:383.50px;top:512.53px;font-size:14.5px;line-height:14.5px;font-weight:400;color:#3d4452;letter-spacing:0.411px;transform:scaleX(1.0617)">Getting_started</div>
<div class="tx" style="left:884.60px;top:512.95px;font-size:14.0px;line-height:14.0px;font-weight:400;color:#3d4452;letter-spacing:0.274px;transform:scaleX(1.0364)">01/23/2023</div>
<div class="tx" style="left:1034.00px;top:512.95px;font-size:14.0px;line-height:14.0px;font-weight:400;color:#3d4452;letter-spacing:0.511px;transform:scaleX(1.0492)">Copy</div>
<div class="tx" style="left:1111.86px;top:512.95px;font-size:14.0px;line-height:14.0px;font-weight:400;color:#3d4452;letter-spacing:0.471px;transform:scaleX(1.0441)">Move</div>
<div class="tx" style="left:1191.35px;top:512.95px;font-size:14.0px;line-height:14.0px;font-weight:400;color:#3d4452;letter-spacing:0.373px;transform:scaleX(1.0494)">Delete</div>
<div class="tx" style="left:383.40px;top:690.53px;font-size:14.5px;line-height:14.5px;font-weight:400;color:#3d4452;letter-spacing:0.435px;transform:scaleX(1.0580)">Teams_backgrounds_-_LM.jpg</div>
<div class="tx" style="left:659.00px;top:690.95px;font-size:14.0px;line-height:14.0px;font-weight:400;color:#3d4452;letter-spacing:-0.101px;transform:scaleX(0.9871)">JPG File</div>
<div class="tx" style="left:779.00px;top:690.95px;font-size:14.0px;line-height:14.0px;font-weight:400;color:#3d4452;letter-spacing:0.025px;transform:scaleX(1.0026)">59 KB</div>
<div class="tx" style="left:884.60px;top:690.95px;font-size:14.0px;line-height:14.0px;font-weight:400;color:#3d4452;letter-spacing:0.274px;transform:scaleX(1.0364)">01/25/2023</div>
<div class="tx" style="left:1034.00px;top:690.95px;font-size:14.0px;line-height:14.0px;font-weight:400;color:#3d4452;letter-spacing:0.511px;transform:scaleX(1.0492)">Copy</div>
<div class="tx" style="left:1111.86px;top:690.95px;font-size:14.0px;line-height:14.0px;font-weight:400;color:#3d4452;letter-spacing:0.471px;transform:scaleX(1.0441)">Move</div>
<div class="tx" style="left:1191.35px;top:690.95px;font-size:14.0px;line-height:14.0px;font-weight:400;color:#3d4452;letter-spacing:0.373px;transform:scaleX(1.0494)">Delete</div>
<div class="tx" style="left:383.40px;top:741.53px;font-size:14.5px;line-height:14.5px;font-weight:400;color:#3d4452;letter-spacing:0.401px;transform:scaleX(1.0672)">default-image.jpg file</div>
<div class="tx" style="left:659.00px;top:741.95px;font-size:14.0px;line-height:14.0px;font-weight:400;color:#3d4452;letter-spacing:-0.101px;transform:scaleX(0.9871)">JPG File</div>
<div class="tx" style="left:778.03px;top:741.95px;font-size:14.0px;line-height:14.0px;font-weight:400;color:#3d4452;letter-spacing:-0.320px;transform:scaleX(0.9654)">147 KB</div>
<div class="tx" style="left:884.60px;top:741.95px;font-size:14.0px;line-height:14.0px;font-weight:400;color:#3d4452;letter-spacing:0.274px;transform:scaleX(1.0364)">01/23/2023</div>
<div class="tx" style="left:1034.00px;top:741.95px;font-size:14.0px;line-height:14.0px;font-weight:400;color:#3d4452;letter-spacing:0.511px;transform:scaleX(1.0492)">Copy</div>
<div class="tx" style="left:1111.86px;top:741.95px;font-size:14.0px;line-height:14.0px;font-weight:400;color:#3d4452;letter-spacing:0.471px;transform:scaleX(1.0441)">Move</div>
<div class="tx" style="left:1191.35px;top:741.95px;font-size:14.0px;line-height:14.0px;font-weight:400;color:#3d4452;letter-spacing:0.373px;transform:scaleX(1.0494)">Delete</div>
</body></html>
